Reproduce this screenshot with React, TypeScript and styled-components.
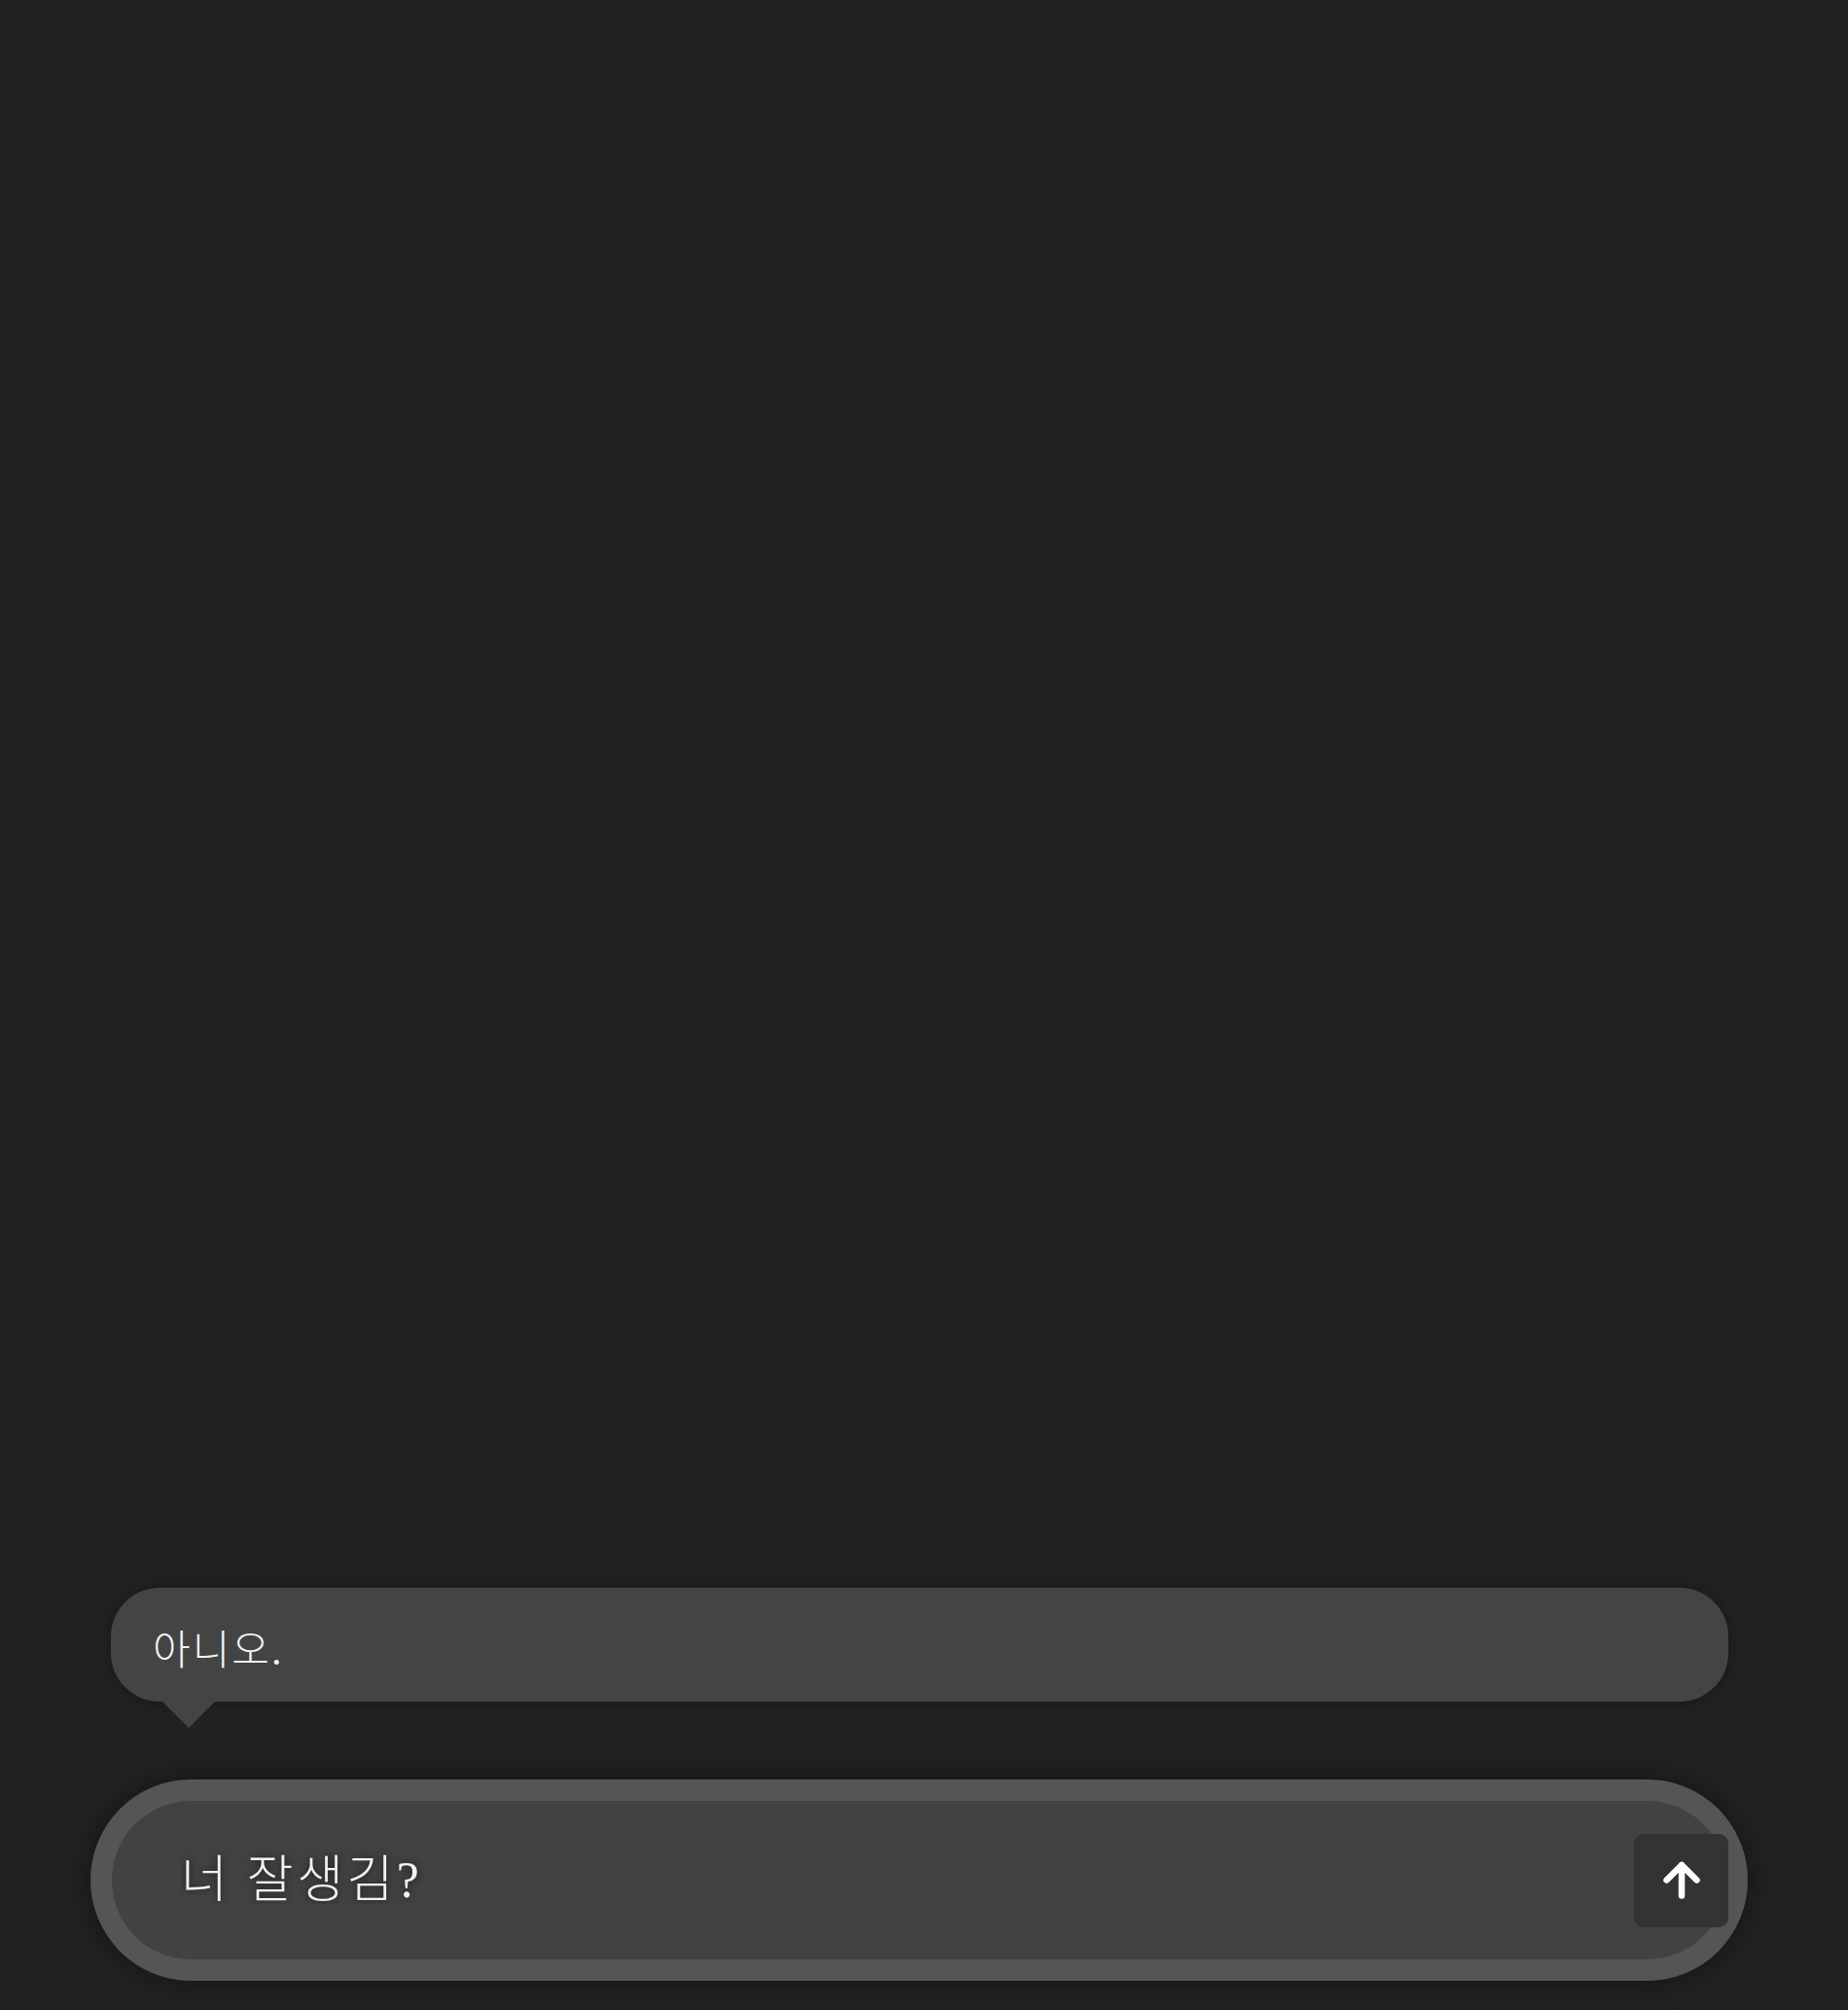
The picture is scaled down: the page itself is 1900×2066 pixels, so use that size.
import React from "react";
import styled, { createGlobalStyle } from "styled-components";

const Global = createGlobalStyle`
  html, body {
    margin: 0;
    padding: 0;
    background: #222222;
  }
  body {
    font-family: "Liberation Serif", "Noto Sans CJK KR", serif;
    color: #ffffff;
  }
`;

const Page = styled.div`
  height: 2066px;
  display: flex;
  flex-direction: column;
  justify-content: flex-end;
  padding: 0 103px 30px 93px;
  box-sizing: border-box;
  background: #222222;
`;

const Bubble = styled.div`
  position: relative;
  margin: 0 20px 80px 21px;
  height: 117px;
  border-radius: 50px;
  background: #444444;
  box-shadow: 0 0 18px rgba(0, 0, 0, 0.35);
  display: flex;
  align-items: center;
  padding-left: 43px;
  font-size: 42px;
  font-weight: 300;
  letter-spacing: 2px;
  color: #f4f4f4;

  &::after {
    content: "";
    position: absolute;
    left: 53px;
    bottom: -27px;
    width: 0;
    height: 0;
    border-left: 27px solid transparent;
    border-right: 27px solid transparent;
    border-top: 27px solid #444444;
  }
`;

const BubbleText = styled.span`
  margin-top: 4px;
`;

const Composer = styled.div`
  height: 207px;
  box-sizing: border-box;
  border: 22px solid #555555;
  border-radius: 104px;
  background: #424242;
  box-shadow: 0 0 30px rgba(0, 0, 0, 0.45);
  display: flex;
  align-items: center;
  padding-left: 71px;
`;

const Field = styled.input`
  flex: 1;
  min-width: 0;
  background: transparent;
  border: none;
  outline: none;
  color: #f2f2f2;
  font-family: "Liberation Serif", "Noto Sans CJK KR", serif;
  font-size: 52px;
  font-weight: 300;
  letter-spacing: 3.5px;
  padding: 0;
  margin-top: -10px;
  text-shadow: 0 0 8px rgba(0, 0, 0, 0.7);
`;

const SendButton = styled.button`
  width: 97px;
  height: 96px;
  margin-right: -2px;
  border: none;
  border-radius: 10px;
  background: #333333;
  display: flex;
  align-items: center;
  justify-content: center;
  padding: 0;
  cursor: pointer;
  position: relative;
  z-index: 1;
`;

export default function App() {
  return (
    <>
      <Global />
      <Page>
        <Bubble>
          <BubbleText>아니오.</BubbleText>
        </Bubble>
        <Composer>
          <Field defaultValue="너 잘생김?" />
          <SendButton aria-label="send">
            <svg width="46" height="46" viewBox="0 0 46 46" fill="none">
              <path
                d="M7.5 22.5 L23 7 L38.5 22.5 M23 7 V38.5"
                stroke="#ffffff"
                strokeWidth="6.5"
                strokeLinecap="round"
                strokeLinejoin="round"
              />
            </svg>
          </SendButton>
        </Composer>
      </Page>
    </>
  );
}
